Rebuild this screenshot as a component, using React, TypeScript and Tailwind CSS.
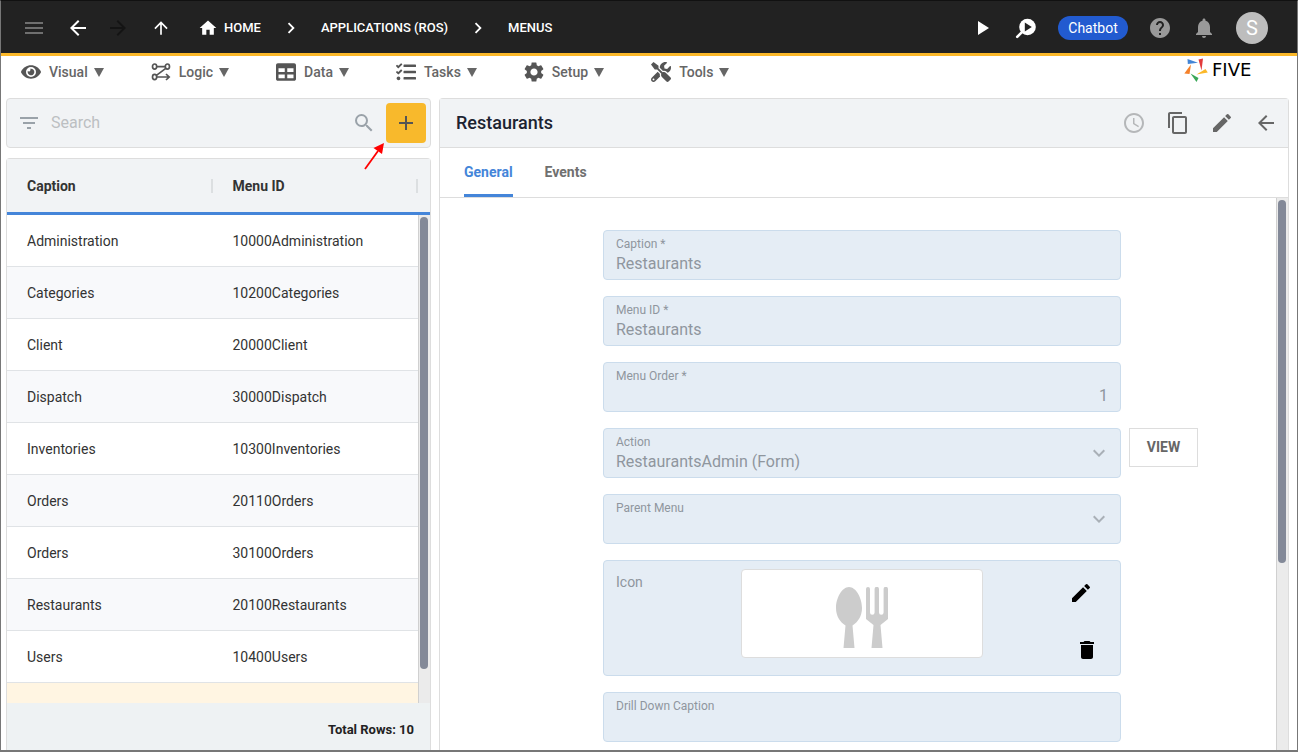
import React, { useState } from 'react';
import {
  MdAdd,
  MdArrowBack,
  MdArrowForward,
  MdArrowUpward,
  MdChevronRight,
  MdContentCopy,
  MdDelete,
  MdEdit,
  MdFilterList,
  MdHelp,
  MdHome,
  MdKeyboardArrowDown,
  MdMenu,
  MdNotifications,
  MdPlayArrow,
  MdSchedule,
  MdSearch,
  MdSettings,
} from 'react-icons/md';
import { FaEye, FaTable, FaTasks, FaTools } from 'react-icons/fa';

const LogicIcon = () => (
  <svg viewBox="0 0 20 20" className="size-5" fill="none" stroke="currentColor" strokeWidth="1.7">
    <ellipse cx="3.6" cy="4.6" rx="2.1" ry="2.6" />
    <ellipse cx="16.4" cy="4.6" rx="2.1" ry="2.6" />
    <ellipse cx="3.6" cy="15" rx="2.1" ry="2.6" />
    <path d="M5.800 4.600h8.400M14.800 6.400L5.400 13.400M5.800 15h12.400M15 12l3.200 3-3.200 3" />
  </svg>
);

const InspectIcon = () => (
  <svg viewBox="0 0 24 24" className="size-6">
    <path d="M3.2 20.8l5-5" stroke="currentColor" strokeWidth="2.6" strokeLinecap="round" />
    <circle cx="13.5" cy="11" r="8.3" fill="currentColor" />
    <path d="M10.8 6.6v8.8l7-4.4z" fill="#222222" />
  </svg>
);

const UtensilsIcon = () => (
  <svg viewBox="0 0 52 61" className="h-[61px] w-[52px]" fill="#cccccc">
    <path d="M13 0C20 0 26 11 26 21c0 8-4 14-9.500 17.500L18.500 61h-11L9.500 38.500C4 35 0 29 0 21 0 11 6 0 13 0z" />
    <path d="M30 2a2 2 0 0 1 4 0v23.500a2.300 2.300 0 0 0 4.600 0V2a2.200 2.200 0 0 1 4.400 0v23.500a2.300 2.300 0 0 0 4.600 0V2a2 2 0 0 1 4.400 0v30l-7.500 6L46.500 61h-11l2-23-7.500-6z" />
  </svg>
);

const Logo = () => (
  <a href="#" aria-label="Five" className="flex w-[88px] items-center gap-1 pt-0.5 text-black">
    <svg viewBox="0 0 24 24" className="size-6 shrink-0">
      <path d="M3.500 1L14 4.800 3.800 6z" fill="#4285d6" />
      <path d="M14.500 1.500L19 .5l-1.500 12z" fill="#e23b3b" />
      <path d="M7 6.500L5.500 16 .3 15.500z" fill="#f5812a" />
      <path d="M12.500 16.500L21.500 11l2.300 3.500z" fill="#fbb829" />
      <path d="M6.500 15.500l8 4.500-2 4z" fill="#3aa757" />
    </svg>
    <span className="font-['DejaVu_Sans',sans-serif] text-lg leading-6">FIVE</span>
  </a>
);

const menuItems = [
  { label: 'Visual', icon: <FaEye className="size-5" /> },
  { label: 'Logic', icon: <LogicIcon /> },
  { label: 'Data', icon: <FaTable className="size-5" /> },
  { label: 'Tasks', icon: <FaTasks className="size-5" /> },
  { label: 'Setup', icon: <MdSettings className="size-6" /> },
  { label: 'Tools', icon: <FaTools className="size-5" /> },
];

const rows = [
  ['Administration', '10000Administration'],
  ['Categories', '10200Categories'],
  ['Client', '20000Client'],
  ['Dispatch', '30000Dispatch'],
  ['Inventories', '10300Inventories'],
  ['Orders', '20110Orders'],
  ['Orders', '30100Orders'],
  ['Restaurants', '20100Restaurants'],
  ['Users', '10400Users'],
];

const fieldBox = 'rounded border border-[#cbdcec] bg-[#e5edf5]';
const cell = 'h-[52px] border-b border-[#e0e3e6] py-0 pr-0 pl-5';

const Header: React.FC = () => (
  <header className="flex h-[55px] shrink-0 items-center justify-between border-b-3 border-[#fbb829] bg-[#222222] pt-0.5 pr-[29px] pl-[11px] text-white">
    <div className="flex items-center">
      <button aria-label="Menu" className="flex w-11 justify-center text-[#6f6f6f]">
        <MdMenu className="size-6" />
      </button>
      <button aria-label="Back" className="flex w-11 justify-center">
        <MdArrowBack className="size-6" />
      </button>
      <button aria-label="Forward" disabled className="flex w-9 justify-center text-[#141414]">
        <MdArrowForward className="size-6" />
      </button>
      <button aria-label="Up" className="flex w-[50px] justify-center">
        <MdArrowUpward className="size-5" />
      </button>
      <nav aria-label="Breadcrumb" className="flex items-center pl-3 text-[13px] font-medium">
        <a href="#" className="flex items-center gap-1.5">
          <MdHome className="size-5" />
          HOME
        </a>
        <span className="flex w-[60px] justify-center">
          <MdChevronRight className="size-[22px]" />
        </span>
        <a href="#">APPLICATIONS (ROS)</a>
        <span className="flex w-[60px] justify-center">
          <MdChevronRight className="size-[22px]" />
        </span>
        <a href="#">MENUS</a>
      </nav>
    </div>
    <div className="flex items-center gap-5">
      <button aria-label="Run">
        <MdPlayArrow className="size-6" />
      </button>
      <button aria-label="Inspect">
        <InspectIcon />
      </button>
      <button className="h-6 w-[70px] rounded-full bg-[#225bd0] text-sm leading-6">Chatbot</button>
      <button aria-label="Help" className="text-[#999999]">
        <MdHelp className="size-6" />
      </button>
      <button aria-label="Notifications" className="text-[#999999]">
        <MdNotifications className="size-6" />
      </button>
      <button className="size-8 rounded-full bg-[#bdbdbd] text-xl leading-8">S</button>
    </div>
  </header>
);

const MenuBar: React.FC = () => (
  <div className="flex h-[42px] shrink-0 items-start justify-between pr-[25px] pl-5">
    <nav className="flex h-8 items-center gap-[47px]">
      {menuItems.map((item) => (
        <button key={item.label} className="flex items-center text-sm font-medium text-[#666666]">
          <span className="flex w-5 justify-center text-[#555555]">
            <span className="shrink-0">{item.icon}</span>
          </span>
          <span className="pr-1.5 pl-2">{item.label}</span>
          <svg viewBox="0 0 10 9" className="h-[9px] w-2.5" fill="currentColor">
            <path d="M0 0h10L5 9z" />
          </svg>
        </button>
      ))}
    </nav>
    <Logo />
  </div>
);

const SearchBar: React.FC = () => {
  const [query, setQuery] = useState('');

  return (
    <div className="relative flex h-[50px] shrink-0 items-center rounded border border-[#dddddd] bg-[#f1f3f5] pr-1 pl-2.5 text-[#9aa2a9]">
      <MdFilterList className="size-6 shrink-0" />
      <input
        type="text"
        aria-label="Search"
        placeholder="Search"
        value={query}
        onChange={(e) => setQuery(e.target.value)}
        className="min-w-0 flex-1 bg-transparent px-2.5 text-base text-[#333333] outline-none placeholder:text-[#bcbfc2]"
      />
      <MdSearch className="size-6 shrink-0" />
      <button aria-label="Add" className="ml-2.5 flex size-10 items-center justify-center rounded bg-[#f8b92c] text-[#555555]">
        <MdAdd className="size-6" />
      </button>
      {/* Pointer to the add button */}
      <svg viewBox="0 0 22 28" className="absolute top-11 right-[45px] h-7 w-[22px]">
        <path d="M2 26L15 8" stroke="#ff0000" strokeWidth="1.8" />
        <path d="M21 0l-2 11-8.500-6z" fill="#ff0000" />
      </svg>
    </div>
  );
};

const MenusTable: React.FC = () => (
  <section className="mt-2.5 flex min-h-0 flex-1 flex-col rounded-t border border-b-0 border-[#dddddd]">
    <div className="flex min-h-0 flex-1 overflow-hidden">
      <div className="min-w-0 flex-1 overflow-hidden">
        <table className="w-full table-fixed border-separate border-spacing-0 text-left text-sm text-[#333333]">
          <thead>
            <tr className="bg-[#f1f3f5] font-bold">
              {['Caption', 'Menu ID'].map((name) => (
                <th key={name} scope="col" className="h-14 border-b-3 border-[#4485d9] p-0">
                  <div className="flex items-center justify-between pl-5">
                    {name}
                    <span className="h-3.5 w-0.5 bg-[#dcdfe1]" />
                  </div>
                </th>
              ))}
            </tr>
          </thead>
          <tbody>
            {rows.map(([caption, menuId]) => (
              <tr key={menuId} className="even:bg-[#f8f9fb]">
                <td className={cell}>{caption}</td>
                <td className={cell}>{menuId}</td>
              </tr>
            ))}
            <tr className="bg-[#fff5e2]">
              <td colSpan={2} className={cell} />
            </tr>
          </tbody>
        </table>
      </div>
      <div className="flex w-3 flex-col">
        <div className="h-14 border-b-3 border-[#4485d9] bg-[#f1f3f5]" />
        <div className="flex-1 border-l border-[#d0d0d0] bg-[#ebebeb] pt-0.5 pl-px">
          <div className="h-[93%] w-2 rounded-full bg-[#838998]" />
        </div>
      </div>
    </div>
    <div className="flex h-[47px] shrink-0 items-center justify-end bg-[#eef2f3] pt-1.5 pr-4 text-[13px] font-bold text-[#222222]">
      Total Rows: 10
    </div>
  </section>
);

type FieldProps = {
  id: string;
  label: string;
  value?: string;
  alignRight?: boolean;
};

const TextField: React.FC<FieldProps> = ({ id, label, value = '', alignRight }) => (
  <div className={`col-start-2 flex h-[50px] flex-col px-3 pt-[5px] text-[#8f969e] ${fieldBox}`}>
    <label htmlFor={id} className="text-xs leading-4">
      {label}
    </label>
    <input
      id={id}
      type="text"
      readOnly
      value={value}
      className={`h-6 w-full bg-transparent text-base outline-none ${alignRight ? 'text-right' : ''}`}
    />
  </div>
);

const SelectField: React.FC<FieldProps> = ({ id, label, value = '' }) => (
  <div className={`relative col-start-2 flex h-[50px] flex-col px-3 pt-[5px] text-[#8f969e] ${fieldBox}`}>
    <label htmlFor={id} className="text-xs leading-4">
      {label}
    </label>
    <select id={id} disabled className="h-6 w-full appearance-none bg-transparent text-base opacity-100 outline-none">
      <option>{value}</option>
    </select>
    <MdKeyboardArrowDown className="pointer-events-none absolute top-3 right-[9px] size-6 text-[#a9b0b7]" />
  </div>
);

const MenuForm: React.FC = () => (
  <form className="grid min-w-0 flex-1 grid-cols-[163fr_518fr_155fr] content-start gap-y-4 overflow-hidden pt-8">
    <TextField id="caption" label="Caption *" value="Restaurants" />
    <TextField id="menu-id" label="Menu ID *" value="Restaurants" />
    <TextField id="menu-order" label="Menu Order *" value="1" alignRight />
    <SelectField id="action" label="Action" value="RestaurantsAdmin (Form)" />
    <div className="col-start-3 pl-2">
      <button type="button" className="h-[39px] w-[69px] border border-[#dddddd] pb-0.5 text-sm font-bold text-[#666666]">
        VIEW
      </button>
    </div>
    <SelectField id="parent-menu" label="Parent Menu" />
    <div className={`col-start-2 grid h-[116px] grid-cols-[1fr_242px_1fr] ${fieldBox}`}>
      <span className="pt-[11px] pl-3 text-sm text-[#8f969e]">Icon</span>
      <div className="mt-2 flex h-[89px] items-center justify-center rounded-sm border border-[#dddddd] bg-white pt-2">
        <UtensilsIcon />
      </div>
      <div className="flex flex-col items-end gap-[27px] pt-3.5 pr-[21px] text-black">
        <button type="button" aria-label="Edit icon" className="flex size-9 items-center justify-center">
          <MdEdit className="size-6" />
        </button>
        <button type="button" aria-label="Delete icon">
          <MdDelete className="size-6" />
        </button>
      </div>
    </div>
    <TextField id="drill-down" label="Drill Down Caption" />
  </form>
);

const DetailPanel: React.FC = () => (
  <section className="flex min-h-0 min-w-0 flex-col rounded-t border border-b-0 border-[#dddddd]">
    <div className="flex h-[49px] shrink-0 items-center justify-between border-b border-[#dddddd] bg-[#f1f3f5] pr-2.5 pl-4">
      <h1 className="text-lg font-medium text-[#1c2331]">Restaurants</h1>
      <div className="flex items-center gap-5 text-[#666666]">
        <button aria-label="History" className="text-[#b5b7b9]">
          <MdSchedule className="size-6" />
        </button>
        <button aria-label="Copy">
          <MdContentCopy className="size-6" />
        </button>
        <button aria-label="Edit">
          <MdEdit className="size-6" />
        </button>
        <button aria-label="Close">
          <MdArrowBack className="size-6" />
        </button>
      </div>
    </div>
    <div role="tablist" className="flex h-[50px] shrink-0 gap-8 border-b border-[#dddddd] pl-6 text-sm font-bold">
      <button role="tab" aria-selected="true" className="border-b-3 border-[#4485d9] pt-0.5 text-[#4485d9]">
        General
      </button>
      <button role="tab" aria-selected="false" className="border-b-3 border-transparent pt-0.5 text-[#707070]">
        Events
      </button>
    </div>
    <div className="flex min-h-0 flex-1">
      <MenuForm />
      <div className="w-3 border-l border-[#d0d0d0] bg-[#ebebeb] pt-0.5 pl-px">
        <div className="h-[66%] w-2 rounded-full bg-[#838998]" />
      </div>
    </div>
  </section>
);

export default function App() {
  return (
    <div className="flex h-screen flex-col overflow-hidden border border-b-2 border-[#777777] border-t-[#111111] bg-white font-['Roboto',sans-serif]">
      <Header />
      <MenuBar />
      <main className="grid min-h-0 flex-1 grid-cols-[1fr_2fr] grid-rows-[minmax(0,1fr)] gap-2 pr-2 pl-[5px]">
        <div className="flex min-h-0 min-w-0 flex-col">
          <SearchBar />
          <MenusTable />
        </div>
        <DetailPanel />
      </main>
    </div>
  );
}
